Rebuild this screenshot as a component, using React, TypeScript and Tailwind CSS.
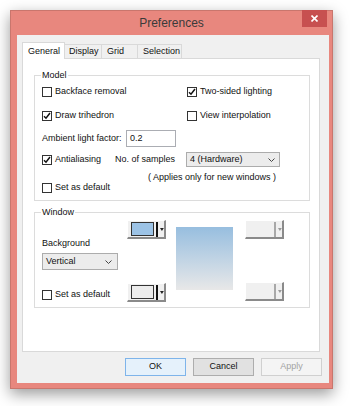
import React from "react";

function Check({ checked, label }: { checked?: boolean; label: string }) {
  return (
    <div className="flex h-[14px] items-center gap-[3px]">
      <span className="flex h-[10px] w-[10px] shrink-0 items-center justify-center border border-[#333] bg-white">
        {checked && (
          <svg width="8" height="8" viewBox="0 0 8 8">
            <path d="M1 4.2l2 2 4-5.2" stroke="#111" strokeWidth="1.5" fill="none" />
          </svg>
        )}
      </span>
      <span>{label}</span>
    </div>
  );
}

function Combo({ value, w }: { value: string; w: string }) {
  return (
    <div className={`flex h-[15px] items-center justify-between border border-[#acacac] bg-[#ececec] pl-[3px] pr-[4px] ${w}`}>
      <span>{value}</span>
      <svg width="7" height="4" viewBox="0 0 7 4">
        <path d="M0.5 0.5l3 3 3-3" stroke="#444" strokeWidth="1" fill="none" />
      </svg>
    </div>
  );
}

function ColorButton({ color }: { color?: string }) {
  const on = !!color;
  return (
    <div className="flex h-[19px] w-[39px] items-center border-t border-l border-t-white border-l-white border-r-2 border-b-2 border-r-[#8a8a8a] border-b-[#8a8a8a] bg-[#f0f0f0] pl-[3px]">
      <span className={`h-[14px] w-[24px] ${on ? "border border-[#333]" : ""}`} style={{ background: color }} />
      <span className={`ml-[2px] h-[15px] w-[2px] ${on ? "bg-[#111]" : "bg-[#a8a8a8]"}`} />
      <svg className="ml-[2px]" width="4" height="3" viewBox="0 0 4 3">
        <path d="M0 0h4L2 3z" fill={on ? "#222" : "#999"} />
      </svg>
    </div>
  );
}

function Group({ title, h, children }: { title: string; h: string; children: React.ReactNode }) {
  return (
    <div className={`relative w-[276px] border border-[#dcdcdc] ${h}`}>
      <span className="absolute -top-[7px] left-[6px] bg-white px-[1px] leading-[12px]">{title}</span>
      {children}
    </div>
  );
}

export default function App() {
  return (
    <div className="h-[406px] w-[350px] overflow-hidden bg-white pl-[10px] pt-[10px] font-['Liberation_Sans',Arial,sans-serif] text-[9px] text-[#111]">
      <div className="relative flex h-[379px] w-[323px] flex-col border border-[#c9766d] bg-[#e8877e] shadow-[0_5px_14px_rgba(0,0,0,0.4)]">
        <div className="flex h-[24px] items-center justify-center text-[12px] text-[#3a3a3a]">Preferences</div>
        <div className="absolute -top-[1px] right-[5px] flex h-[17px] w-[25px] items-center justify-center bg-[#c75050]">
          <svg width="7" height="7" viewBox="0 0 7 7">
            <path d="M0.5 0.5l6 6M6.5 0.5l-6 6" stroke="#fff" strokeWidth="1.6" />
          </svg>
        </div>

        <div className="ml-[6px] flex h-[348px] w-[312px] flex-col bg-[#f0f0f0] pl-[5px] pt-[7px]">
          {/* tabs */}
          <div className="flex h-[16px] items-end">
            <div className="relative z-10 -mb-[1px] flex h-[17px] w-[43px] items-start border border-b-0 border-[#d9d9d9] bg-white pl-[5px] pt-[2px]">
              General
            </div>
            <div className="flex h-[14px] w-[37px] items-center border-t border-r border-[#d9d9d9] bg-[#f0f0f0] pl-[4px]">Display</div>
            <div className="flex h-[14px] w-[36px] items-center border-t border-r border-[#d9d9d9] bg-[#f0f0f0] pl-[5px]">Grid</div>
            <div className="flex h-[14px] w-[44px] items-center border-t border-r border-[#d9d9d9] bg-[#f0f0f0] pl-[5px]">Selection</div>
          </div>

          {/* panel */}
          <div className="h-[294px] w-[298px] border border-[#d9d9d9] bg-white pl-[11px] pt-[16px]">
            <Group title="Model" h="h-[126px]">
              <div className="flex flex-col pl-[7px] pt-[9px]">
                <div className="flex">
                  <div className="w-[145px]"><Check label="Backface removal" /></div>
                  <Check checked label="Two-sided lighting" />
                </div>
                <div className="mt-[10px] flex">
                  <div className="w-[145px]"><Check checked label="Draw trihedron" /></div>
                  <Check label="View interpolation" />
                </div>
                <div className="mt-[7px] flex h-[17px] items-center">
                  <span className="w-[84px]">Ambient light factor:</span>
                  <div className="flex h-[17px] w-[50px] items-center border border-[#abadb3] bg-white pl-[3px]">0.2</div>
                </div>
                <div className="mt-[5px] flex h-[15px] items-center">
                  <div className="w-[73px]"><Check checked label="Antialiasing" /></div>
                  <span className="w-[71px]">No. of samples</span>
                  <Combo value="4 (Hardware)" w="w-[94px]" />
                </div>
                <div className="mt-[5px] flex h-[12px] items-center pl-[106px]">( Applies only for new windows )</div>
                <div className="-mt-[3px]">
                  <Check label="Set as default" />
                </div>
              </div>
            </Group>

            <div className="mt-[11px]">
              <Group title="Window" h="h-[96px]">
                <div className="flex pl-[7px]">
                  <div className="flex w-[76px] flex-col pt-[24px]">
                    <span className="leading-[12px]">Background</span>
                    <div className="mt-[4px]">
                      <div className="flex h-[17px] items-center justify-between border border-[#acacac] bg-[#ececec] pl-[3px] pr-[5px]">
                        <span>Vertical</span>
                        <svg width="7" height="4" viewBox="0 0 7 4">
                          <path d="M0.5 0.5l3 3 3-3" stroke="#444" strokeWidth="1" fill="none" />
                        </svg>
                      </div>
                    </div>
                    <div className="mt-[18px]">
                      <Check label="Set as default" />
                    </div>
                  </div>
                  <div className="ml-[9px] flex flex-col pt-[7px]">
                    <ColorButton color="#9cc3e6" />
                    <div className="mt-[44px]">
                      <ColorButton color="#ececec" />
                    </div>
                  </div>
                  <div className="ml-[10px] mt-[14px] h-[63px] w-[57px] bg-gradient-to-b from-[#97bedf] to-[#e8e8e8]" />
                  <div className="ml-[12px] flex flex-col pt-[7px]">
                    <ColorButton />
                    <div className="mt-[43px]">
                      <ColorButton />
                    </div>
                  </div>
                </div>
              </Group>
            </div>
          </div>

          {/* buttons */}
          <div className="mt-[6px] flex gap-[7px] pl-[103px]">
            <div className="flex h-[18px] w-[61px] items-center justify-center border border-[#7eb4ea] bg-[#e5f1fb]">OK</div>
            <div className="flex h-[18px] w-[61px] items-center justify-center border border-[#adadad] bg-[#e1e1e1]">Cancel</div>
            <div className="flex h-[18px] w-[61px] items-center justify-center border border-[#d0d0d0] bg-[#f4f4f4] text-[#a3a3a3]">Apply</div>
          </div>
        </div>
      </div>
    </div>
  );
}
